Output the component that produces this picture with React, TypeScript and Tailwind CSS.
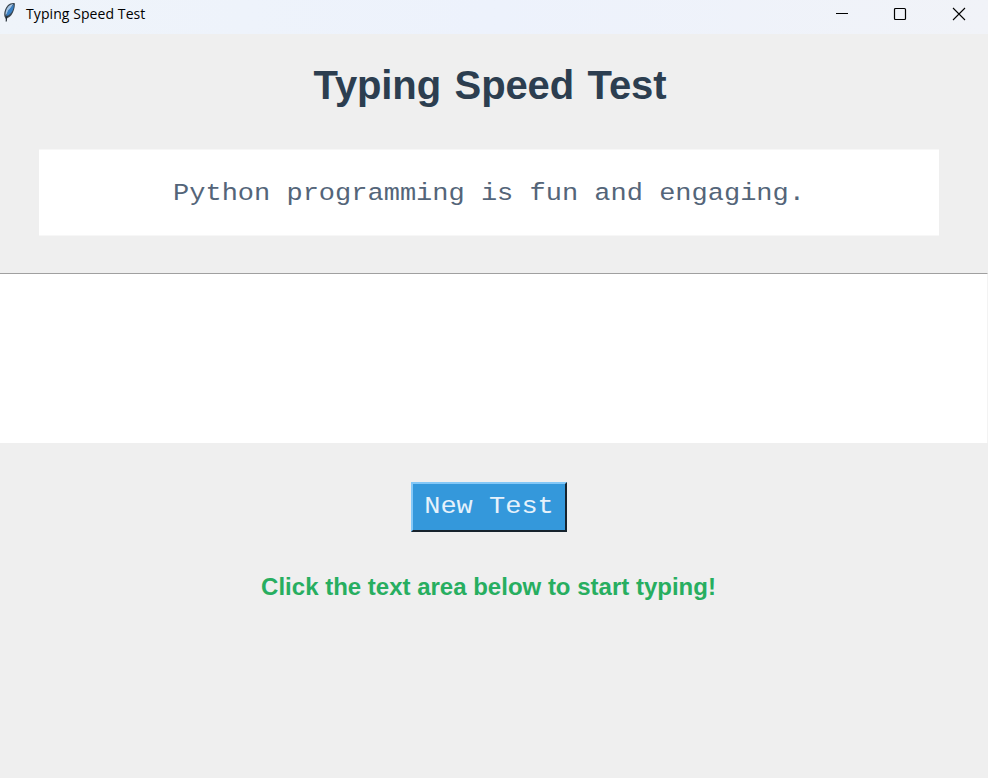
import { useState } from 'react';

function FeatherIcon() {
  return (
    <svg className="h-[22px] w-[14px] shrink-0" viewBox="0 0 14 22" fill="none">
      <path d="M5 19.5 3.6 16.7C2.4 13.5 4 8.2 6.8 5.2 9 3.1 11.9 2.4 13.8 3.2 14.2 6.5 13 11.6 10.5 14.9 9.1 16.8 7 17.8 5.8 18Z" fill="#39454f" />
      <path d="M4.7 15.4C4 12.6 5.2 8.7 7.6 6.2 9 4.8 11 4 12.3 4L9.1 9.1Z" fill="#a5c5e5" />
      <path d="M4.9 16.2C9.8 15 12.8 10.6 12.9 4.2L7 10.4Z" fill="#397fc3" />
      <path d="M5.2 21.5C5.3 19 5.6 17.6 6.2 15.8" stroke="#202a33" strokeWidth="1.2" />
    </svg>
  );
}

function TitleBar() {
  return (
    <header className="flex h-[34px] items-start bg-gradient-to-r from-[#eff4fa] via-[#edf2fc] to-[#f1f3f8] pl-[1px] font-['Open_Sans','Noto_Sans',sans-serif] text-black">
      <FeatherIcon />
      <span className="ml-[11px] mt-[4px] whitespace-nowrap text-[14px] leading-[20px] tracking-[0.08px]">Typing Speed Test</span>
      <div className="ml-auto flex pt-[7px]">
        <button aria-label="Minimize" className="mr-[44px]">
          <svg className="block h-[14px] w-[14px]" viewBox="0 0 14 14"><path d="M1 6.5H13" stroke="#000" /></svg>
        </button>
        <button aria-label="Maximize" className="mr-[45px]">
          <svg className="block h-[14px] w-[14px]" viewBox="0 0 14 14"><rect x="1.5" y="1.5" width="11" height="11" rx="1" fill="none" stroke="#000" strokeWidth="1.2" /></svg>
        </button>
        <button aria-label="Close" className="mr-[22px]">
          <svg className="block h-[14px] w-[14px]" viewBox="0 0 14 14"><path d="M1 1 13 13M13 1 1 13" stroke="#000" strokeWidth="1.1" /></svg>
        </button>
      </div>
    </header>
  );
}

export default function App() {
  const [text, setText] = useState('');
  return (
    <div className="flex h-[778px] w-[988px] flex-col overflow-hidden bg-[#efefef] font-['Liberation_Sans',Arial,sans-serif]">
      <TitleBar />
      <h1 className="mt-[28px] whitespace-nowrap pr-[8px] text-center text-[40px] font-bold leading-[46px] tracking-[-0.1px] text-[#2c3e50] [word-spacing:2.5px]">Typing Speed Test</h1>
      <div className="ml-[39px] mt-[41px] flex h-[87px] w-[900px] items-center justify-center border-y border-[#f7f7f7] bg-white pt-[2px]">
        <p className="scale-y-[0.87] whitespace-pre font-['Courier_New','Liberation_Mono',monospace] text-[27px] leading-[32px] text-[#546579]">Python programming is fun and engaging.</p>
      </div>
      <textarea
        aria-label="Typing area"
        value={text}
        onChange={(event) => setText(event.target.value)}
        className="mt-[37px] block h-[170px] w-full resize-none border-r border-t border-r-[#f3f3f3] border-t-[#a0a0a0] bg-white p-2 text-[24px] outline-none"
      />
      <button onClick={() => setText('')} className="ml-[411px] mt-[39px] flex h-[50px] w-[156px] items-center justify-center border-2 border-b-[#17232d] border-l-[#83c8f8] border-r-[#17232d] border-t-[#83c8f8] bg-[#3498db]">
        <span className="scale-y-[0.87] whitespace-pre font-['Courier_New','Liberation_Mono',monospace] text-[27px] leading-[32px] text-[#e6f2fb]">New Test</span>
      </button>
      <p className="mt-[41px] whitespace-nowrap pr-[11px] text-center text-[24px] font-bold leading-[28px] text-[#27ae60]">Click the text area below to start typing!</p>
    </div>
  );
}
